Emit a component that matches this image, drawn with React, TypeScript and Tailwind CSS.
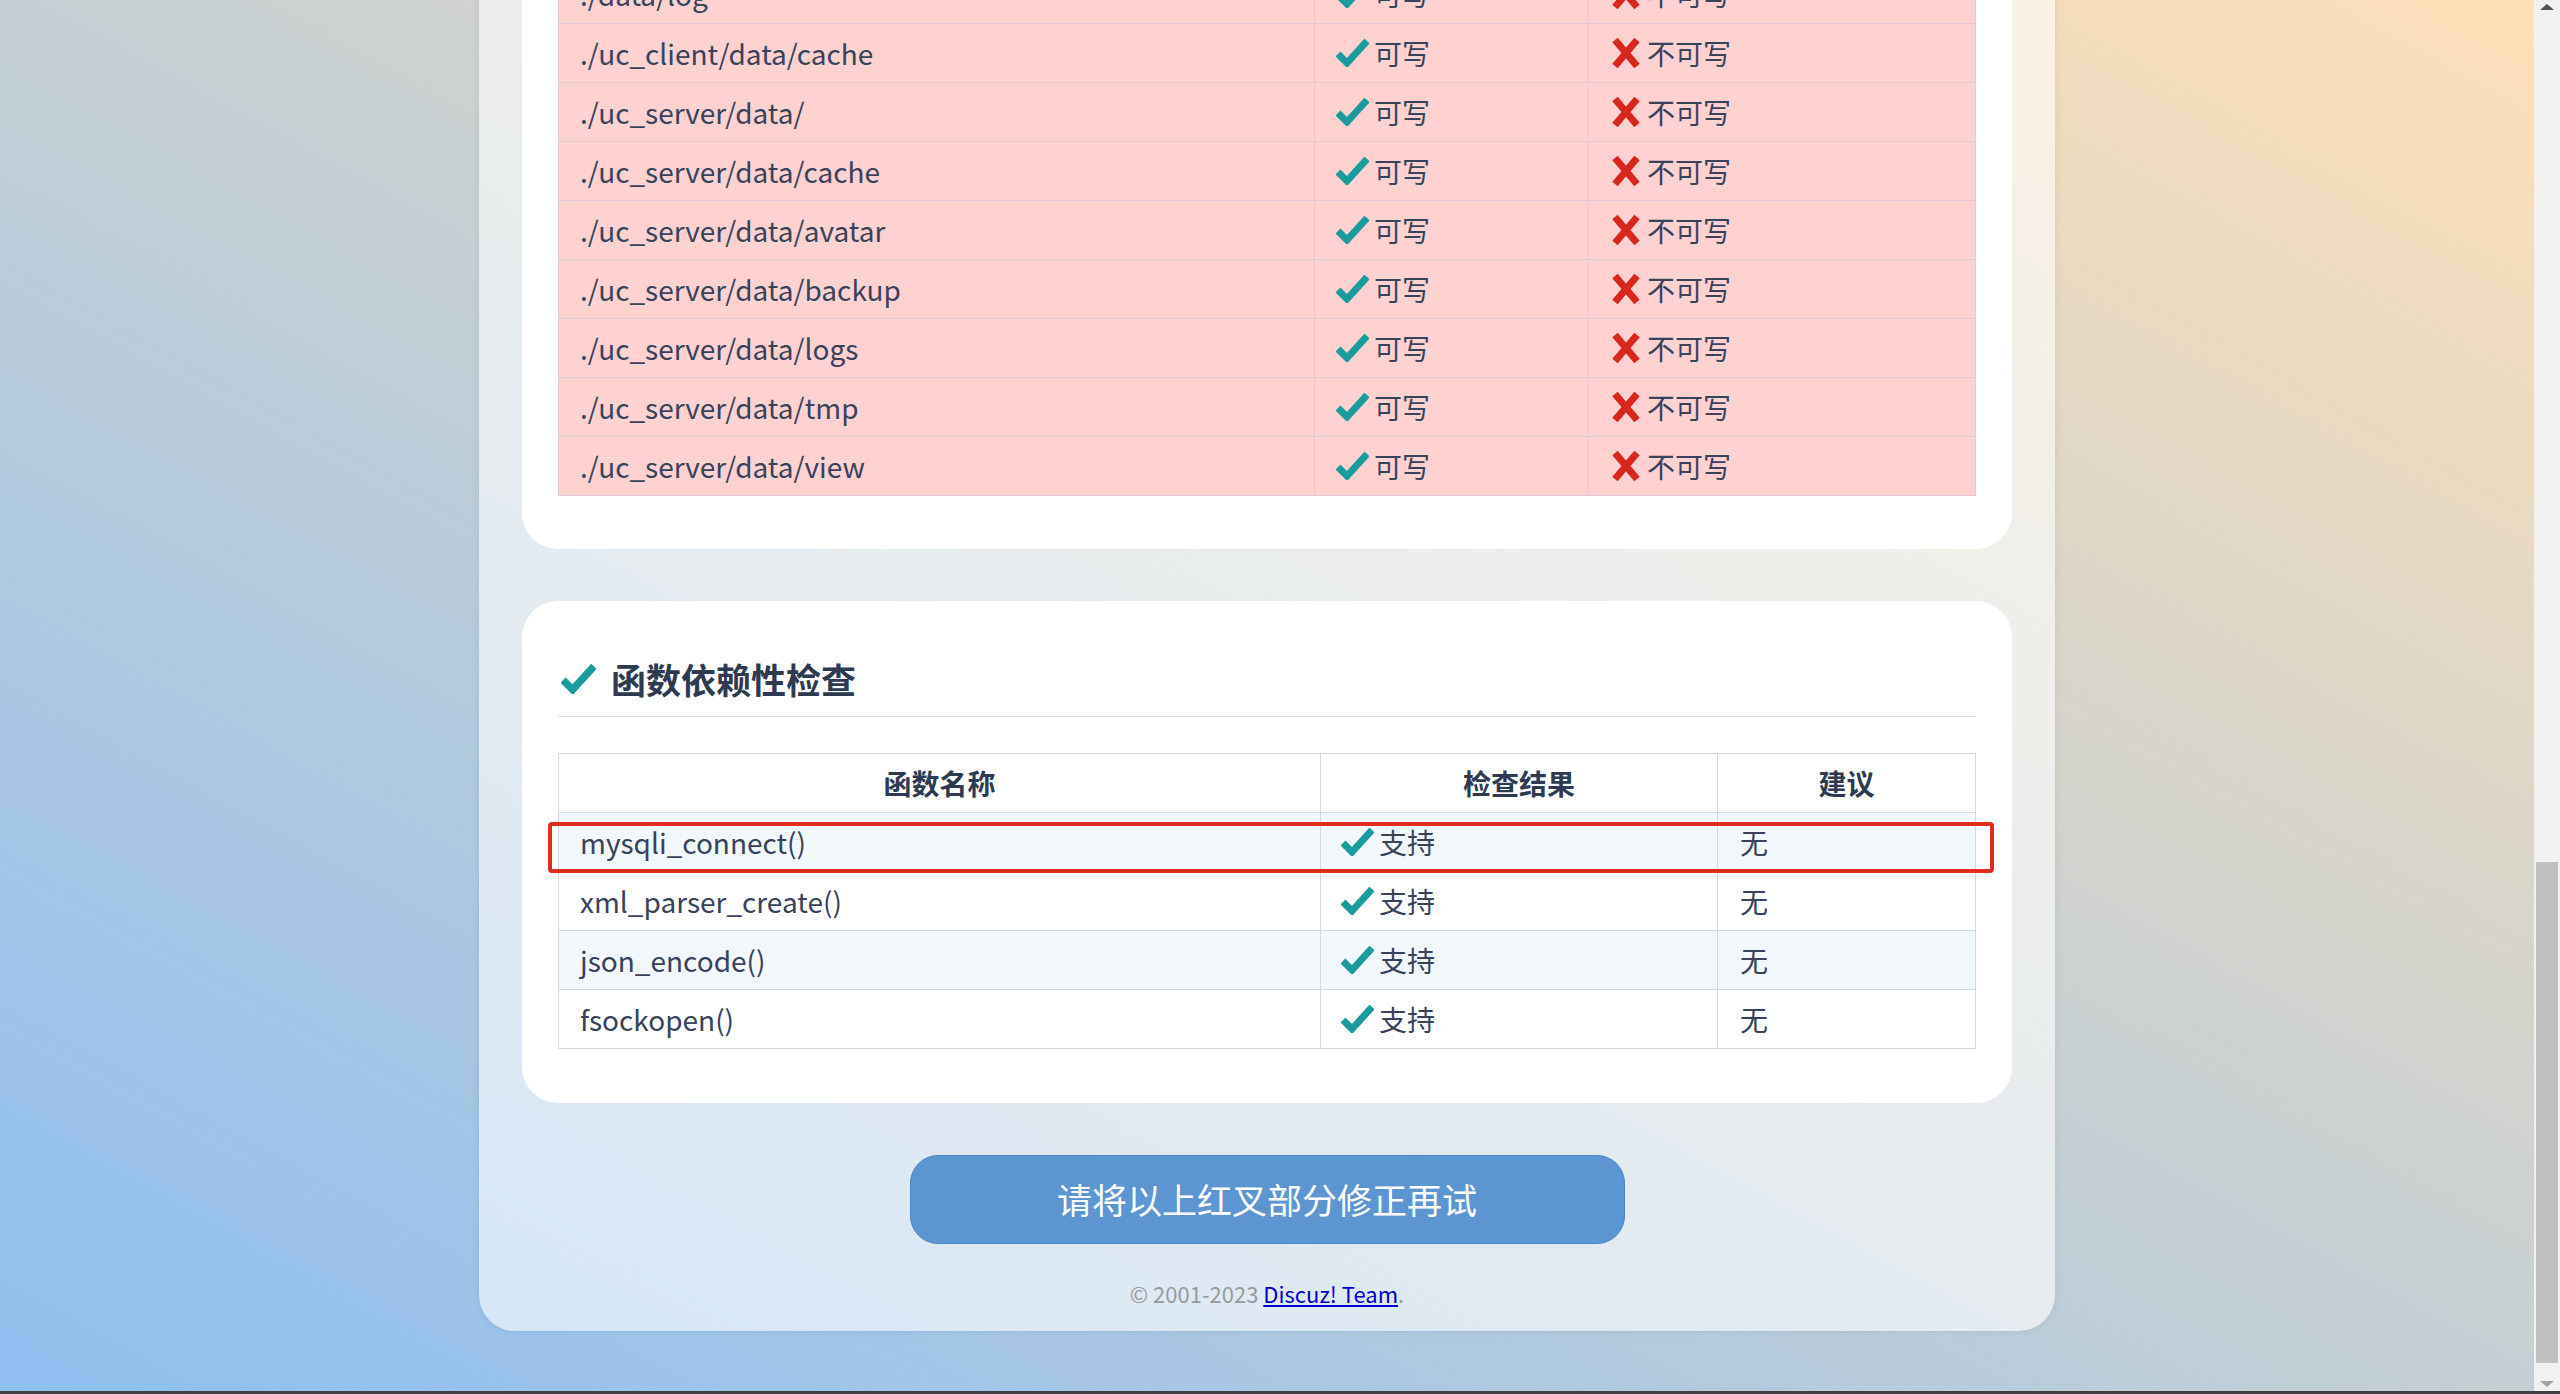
import React from 'react';

const dirs = [
  './data/log',
  './uc_client/data/cache',
  './uc_server/data/',
  './uc_server/data/cache',
  './uc_server/data/avatar',
  './uc_server/data/backup',
  './uc_server/data/logs',
  './uc_server/data/tmp',
  './uc_server/data/view',
];

const funcs = ['mysqli_connect()', 'xml_parser_create()', 'json_encode()', 'fsockopen()'];

function Check({ className = 'w-[33px] h-[28px]' }: { className?: string }) {
  return (
    <svg viewBox="0 0 33 28" className={className}>
      <polyline points="2,15 11,24 31,2" fill="none" stroke="#1a9b9c" strokeWidth="7" strokeLinejoin="miter" />
    </svg>
  );
}

function Cross() {
  return (
    <svg viewBox="0 0 30 30" className="w-[30px] h-[30px]">
      <path d="M4 2 L26 28 M26 2 L4 28" fill="none" stroke="#d8261b" strokeWidth="7" strokeLinecap="butt" />
    </svg>
  );
}

export default function App() {
  return (
    <div className="w-[2560px] h-[1394px] flex flex-col overflow-hidden font-['Noto_Sans_CJK_SC','Noto_Sans',sans-serif] text-[#38425a]">
      <div className="flex flex-1 min-h-0">
        {/* page */}
        <div className="flex-1 overflow-hidden bg-[linear-gradient(to_top_right,#8ebff0,#fde0b8)]">
          <div className="w-[1576px] mx-auto mt-[-35px] px-[43px] pb-[23px] bg-white/60 rounded-b-[36px] shadow-[0_0_8px_rgba(0,0,0,0.08)]">
            {/* directory check card (scrolled) */}
            <div className="bg-white rounded-b-[36px] px-[36px] pb-[53px]">
              <div className="border-l border-[#dccbd2] text-[28px]">
                {dirs.map((d) => (
                  <div key={d} className="grid grid-cols-[756px_273px_388px] h-[59px] bg-[#ffd1d1] border-b border-[#dccbd2]">
                    <div className="flex items-center px-[21px] border-r border-[#dccbd2]">{d}</div>
                    <div className="flex items-center gap-[5px] pl-[21px] border-r border-[#dccbd2]">
                      <Check />
                      <span>可写</span>
                    </div>
                    <div className="flex items-center gap-[6px] pl-[23px] border-r border-[#dccbd2]">
                      <Cross />
                      <span>不可写</span>
                    </div>
                  </div>
                ))}
              </div>
            </div>

            {/* function check card */}
            <div className="mt-[52px] bg-white rounded-[36px] px-[36px] pt-[52px] pb-[54px]">
              <h2 className="flex items-center h-[64px] pb-[12px] border-b border-[#d9dde3] text-[35px] font-bold text-[#2e3a4f]">
                <Check className="w-[35px] h-[30px] ml-[3px]" />
                <span className="ml-[15px] leading-[52px]">函数依赖性检查</span>
              </h2>
              <div className="relative mt-[36px] border-t border-l border-[#d3d9e2] text-[28px]">
                <div className="grid grid-cols-[762px_397px_258px] h-[59px] border-b border-[#d3d9e2] font-bold text-[#2e3a4f]">
                  <div className="flex items-center justify-center border-r border-[#d3d9e2]">函数名称</div>
                  <div className="flex items-center justify-center border-r border-[#d3d9e2]">检查结果</div>
                  <div className="flex items-center justify-center border-r border-[#d3d9e2]">建议</div>
                </div>
                {funcs.map((f, i) => (
                  <div
                    key={f}
                    className={`grid grid-cols-[762px_397px_258px] h-[59px] border-b border-[#d3d9e2] ${i % 2 === 0 ? 'bg-[#f2f7fc]' : 'bg-white'}`}
                  >
                    <div className="flex items-center px-[21px] border-r border-[#d3d9e2]">{f}</div>
                    <div className="flex items-center gap-[5px] pl-[20px] border-r border-[#d3d9e2]">
                      <Check />
                      <span>支持</span>
                    </div>
                    <div className="flex items-center pl-[22px] border-r border-[#d3d9e2]">无</div>
                  </div>
                ))}
                {/* red highlight annotation */}
                <div className="absolute left-[-11px] top-[68px] w-[1446px] h-[51px] border-[4px] border-[#e52a1e] rounded-[4px]" />
              </div>
            </div>

            <div className="flex justify-center mt-[52px]">
              <button className="w-[715px] h-[89px] rounded-[28px] bg-[#5b95d2] border border-[#4a86c8] text-white text-[35px]">
                请将以上红叉部分修正再试
              </button>
            </div>

            <div className="mt-[34px] text-center text-[22px] leading-[30px] text-[#9a9a9a]">
              © 2001-2023{' '}
              <a href="#" className="text-[#0000cc] underline">
                Discuz! Team
              </a>
              .
            </div>
          </div>
        </div>

        {/* scrollbar */}
        <div className="w-[26px] bg-[#f1f1f1] flex flex-col items-center">
          <div className="mt-[4px] w-0 h-0 border-l-[7px] border-r-[7px] border-b-[6px] border-l-transparent border-r-transparent border-b-[#505050]" />
          <div className="mt-[852px] w-[22px] h-[501px] bg-[#c1c1c1]" />
          <div className="mt-auto mb-[4px] w-0 h-0 border-l-[7px] border-r-[7px] border-t-[6px] border-l-transparent border-r-transparent border-t-[#a3a3a3]" />
        </div>
      </div>
      <div className="h-[3px] bg-[#3f3f3f]" />
    </div>
  );
}
